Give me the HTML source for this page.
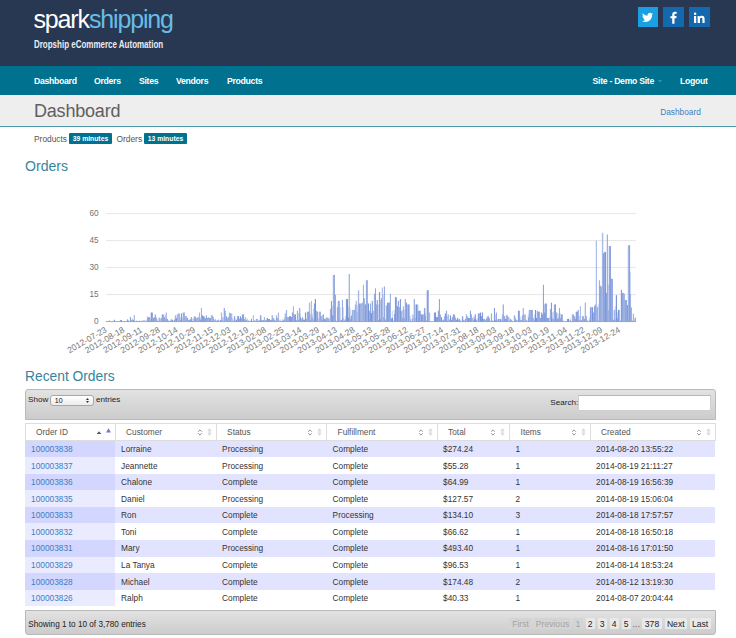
<!DOCTYPE html>
<html><head><meta charset="utf-8"><title>Dashboard</title>
<style>
*{box-sizing:border-box}
html,body{margin:0;padding:0}
body{width:736px;height:638px;overflow:hidden;background:#fff;font-family:"Liberation Sans",sans-serif;position:relative;color:#333}
.hdr{position:absolute;left:0;top:0;width:736px;height:65.5px;background:#293852}
.logo{position:absolute;left:33.5px;top:4.25px;font-size:25px;line-height:30px;color:#fff;letter-spacing:-1.15px;white-space:nowrap}
.logo b{font-weight:normal;color:#66bde6}
.tag{position:absolute;left:34px;top:37.9px;font-size:11.5px;line-height:12px;font-weight:bold;color:#e9ecf1;white-space:nowrap;transform-origin:0 50%;transform:scaleX(0.694)}
.soc{position:absolute;top:6.75px;width:20.5px;height:20.5px}
.nav{position:absolute;left:0;top:65.5px;width:736px;height:29.5px;background:#00728f}
.nav a{position:absolute;top:0.5px;line-height:30px;font-size:8.7px;letter-spacing:-0.3px;font-weight:bold;color:#fff;white-space:nowrap}
.tbar{position:absolute;left:0;top:95px;width:736px;height:32px;background:#eeeeee;border-bottom:1px solid #4c98ad}
.tbar h1{position:absolute;left:34px;top:1px;margin:0;font-size:18px;line-height:31px;font-weight:normal;color:#606060;letter-spacing:-0.2px}
.tbar .crumb{position:absolute;left:660.2px;top:0.5px;line-height:33px;font-size:8.3px;color:#3c7fc0}
.sync{position:absolute;left:34px;top:132.4px;height:12px;font-size:8.4px;line-height:14px;color:#555;white-space:nowrap}
.badge{position:absolute;top:0.3px;height:11px;line-height:11px;background:#00728f;color:#fff;font-weight:bold;font-size:6.8px;text-align:center;border-radius:1px}
h2{position:absolute;margin:0;font-weight:normal;font-size:13.8px;line-height:18px;color:#3585a0;left:25px;white-space:nowrap}
.chart{position:absolute;left:0;top:190px}
.tool{position:absolute;left:24.8px;width:691.4px;border:1px solid #b9b9b9;background:linear-gradient(#e2e2e2,#cccccc);font-size:8.1px;color:#222}
.tool.top{top:389px;height:30.5px;border-radius:3px 3px 0 0}
.tool.bot{top:609.6px;height:25px;border-radius:0 0 3px 3px}
.sel{position:absolute;left:24px;top:5px;width:44.5px;height:11px;border:1px solid #a8a8a8;border-radius:3px;background:linear-gradient(#fff,#ececec);font-size:7px;line-height:9px;padding-left:4px;color:#111}
.search{position:absolute;left:552.6px;top:4.6px;width:132.4px;height:16.2px;background:#fff;border:1px solid #cfcfcf;border-top-color:#b8b8b8;border-radius:1px}
table{position:absolute;left:24.6px;top:423.1px;width:690.5px;border-collapse:collapse;table-layout:fixed;font-size:8.3px;color:#333}
th{height:16.5px;border:1px solid #ddd;background:#fff;font-weight:normal;color:#555;text-align:left;padding:0;font-size:8.3px}
.thw{position:relative;padding-left:10.5px;line-height:14px;padding-top:0.9px;height:15.5px}
.si{position:absolute;right:13px;top:5px;line-height:0}
.si2{position:absolute;right:4px;top:4.2px;line-height:0}
td{height:16.56px;padding:1.5px 0 0 6px;line-height:15.06px;white-space:nowrap;overflow:hidden}
tr.odd td{background:#e2e4ff}
tr.odd td.s1{background:#d3d6ff}
tr.even td{background:#fff}
tr.even td.s1{background:#eaebff}
td a{color:#3a80c2}
.pg{position:absolute;top:7.2px;height:11.5px;line-height:12.5px;font-size:8.6px;margin-left:-0.8px;color:#222;background:#e9e9e9;text-align:center;border-radius:1px}
.pg.dis{background:#d4d4d4;color:#a4a4a4}
</style></head><body>
<div class="hdr">
 <div class="logo">spark<b>shipping</b></div>
 <div class="tag">Dropship eCommerce Automation</div>
 <div class="soc" style="left:637.5px;background:#1a9fe3"><svg width="20" height="20" viewBox="0.500 -0.700 20 20"><path d="M15.6 6.3c-.4.2-.9.3-1.3.4.5-.3.8-.7 1-1.300-.4.300-.9.400-1.400.500a2.300 2.300 0 0 0-3.900 2.100c-1.900-.1-3.600-1-4.700-2.400-.6 1-.3 2.400.7 3-.4 0-.7-.1-1-.3 0 1.100.8 2.100 1.800 2.300-.3.100-.7.100-1 0 .3.900 1.100 1.600 2.100 1.600-1 .8-2.200 1.100-3.400 1 1 .700 2.300 1 3.500 1 4.300 0 6.700-3.700 6.500-6.900.4-.3.800-.7 1.100-1.100z" fill="#fff"/></svg></div>
 <div class="soc" style="left:663.2px;background:#1468ad"><svg width="20" height="20" viewBox="-0.700 -0.700 20 20"><path d="M10.800 16v-5.500h1.800l.3-2.100h-2.100v-1.300c0-.6.2-1 1-1h1.200V4.200c-.2 0-.9-.1-1.700-.1-1.700 0-2.800 1-2.800 2.900v1.500H6.700v2.100h1.800V16z" fill="#fff"/></svg></div>
 <div class="soc" style="left:689.2px;background:#1468ad"><svg width="20" height="20" viewBox="0 -0.900 20 20"><path d="M5 8h2.200v7H5zM6.100 4.600a1.250 1.250 0 1 1 0 2.500 1.250 1.250 0 0 1 0-2.500zM8.600 8h2.100v1c.3-.6 1.100-1.200 2.200-1.200 2.300 0 2.700 1.500 2.700 3.400V15h-2.200v-3.400c0-.8 0-1.800-1.100-1.800s-1.300.9-1.300 1.800V15H8.600z" fill="#fff"/></svg></div>
</div>
<div class="nav">
 <a style="left:34px">Dashboard</a><a style="left:94px">Orders</a><a style="left:139px">Sites</a><a style="left:176px">Vendors</a><a style="left:227px">Products</a>
 <a style="left:592.6px">Site - Demo Site</a><svg style="position:absolute;left:657.5px;top:14px" width="4" height="3" viewBox="0 0 4 3"><path d="M0 0H4L2 2.500Z" fill="#3a93ab"/></svg><a style="left:680px">Logout</a>
</div>
<div class="tbar"><h1>Dashboard</h1><span class="crumb">Dashboard</span></div>
<div class="sync">Products<span class="badge" style="left:35.3px;width:42.3px">39 minutes</span><span style="position:absolute;left:82.5px">Orders</span><span class="badge" style="left:110px;width:43px">13 minutes</span></div>
<h2 style="top:157.4px;font-size:14.1px">Orders</h2>
<svg class="chart" width="736" height="180" viewBox="0 190 736 180">
<g font-family="Liberation Sans, sans-serif" font-size="8.2" fill="#727272">
<line x1="105.8" x2="635.8" y1="213.6" y2="213.6" stroke="#e6e6e6" stroke-width="1"/><text x="98.5" y="215.7" text-anchor="end">60</text><line x1="105.8" x2="635.8" y1="240.6" y2="240.6" stroke="#e6e6e6" stroke-width="1"/><text x="98.5" y="242.7" text-anchor="end">45</text><line x1="105.8" x2="635.8" y1="267.6" y2="267.6" stroke="#e6e6e6" stroke-width="1"/><text x="98.5" y="269.7" text-anchor="end">30</text><line x1="105.8" x2="635.8" y1="294.6" y2="294.6" stroke="#e6e6e6" stroke-width="1"/><text x="98.5" y="296.7" text-anchor="end">15</text><line x1="105.8" x2="635.8" y1="321.6" y2="321.6" stroke="#c8c8c8" stroke-width="1"/><text x="98.5" y="323.7" text-anchor="end">0</text>
</g>
<g><rect x="105.8" y="321.1" width="530.0" height="0.9" fill="#8fa7df"/><path d="M105.8 321.6V321.1H106.8V321.2H107.8V321.0H108.8V319.9H109.8V321.2H110.8V321.1H111.8V321.2H112.8V321.2H113.8V319.8H114.8V321.2H115.8V321.1H116.8V321.2H117.8V321.1H118.8V321.2H119.8V320.0H120.8V320.0H121.8V321.2H122.8V321.2H123.8V321.0H124.8V321.2H125.8V321.2H126.8V319.4H127.8V319.9H128.8V320.9H129.8V317.1H130.8V320.2H131.8V318.9H132.8V320.2H133.8V315.3H134.8V321.0H135.8V320.7H136.8V320.9H137.8V321.0H138.8V320.7H139.8V321.2H140.8V321.3H141.8V319.8H142.8V320.1H143.8V320.1H144.8V319.8H145.8V320.8H146.8V315.9H147.8V317.1H148.8V317.1H149.8V318.7H150.8V312.6H151.8V312.6H152.8V318.0H153.8V317.1H154.8V314.4H155.8V317.6H156.8V319.6H157.8V318.5H158.8V317.6H159.8V319.1H160.8V317.9H161.8V314.4H162.8V314.4H163.8V317.1H164.8V315.1H165.8V312.6H166.8V318.9H167.8V320.4H168.8V320.7H169.8V320.5H170.8V319.3H171.8V319.8H172.8V320.3H173.8V319.5H174.8V315.3H175.8V318.0H176.8V314.4H177.8V313.5H178.8V313.5H179.8V317.3H180.8V313.5H181.8V318.0H182.8V312.6H183.8V312.6H184.8V316.2H185.8V316.2H186.8V318.0H187.8V320.2H188.8V319.8H189.8V319.4H190.8V317.1H191.8V318.5H192.8V318.9H193.8V316.5H194.8V316.8H195.8V318.5H196.8V317.3H197.8V317.5H198.8V312.6H199.8V317.3H200.8V308.1H201.8V315.3H202.8V316.2H203.8V316.7H204.8V318.3H205.8V315.3H206.8V318.0H207.8V317.1H208.8V318.0H209.8V318.0H210.8V315.3H211.8V315.3H212.8V317.1H213.8V319.8H214.8V319.3H215.8V321.5H216.8V320.1H217.8V319.6H218.8V320.7H219.8V320.0H220.8V312.6H221.8V317.3H222.8V317.3H223.8V308.1H224.8V310.8H225.8V316.2H226.8V318.0H227.8V317.1H228.8V312.6H229.8V313.5H230.8V313.5H231.8V318.0H232.8V319.4H233.8V316.2H234.8V318.7H235.8V319.8H236.8V316.2H237.8V316.2H238.8V318.9H239.8V316.2H240.8V318.0H241.8V314.4H242.8V314.4H243.8V319.2H244.8V317.0H245.8V319.7H246.8V318.2H247.8V320.5H248.8V321.1H249.8V320.7H250.8V318.9H251.8V320.9H252.8V315.3H253.8V320.4H254.8V320.6H255.8V318.9H256.8V318.9H257.8V320.7H258.8V320.2H259.8V315.3H260.8V320.4H261.8V319.9H262.8V320.2H263.8V317.1H264.8V320.2H265.8V319.8H266.8V318.0H267.8V318.9H268.8V318.9H269.8V320.2H270.8V319.8H271.8V315.3H272.8V318.0H273.8V319.8H274.8V320.2H275.8V315.3H276.8V318.0H277.8V312.6H278.8V319.9H279.8V319.4H280.8V320.9H281.8V319.4H282.8V320.4H283.8V317.3H284.8V313.5H285.8V309.9H286.8V317.1H287.8V317.1H288.8V316.2H289.8V316.2H290.8V317.1H291.8V312.6H292.8V306.3H293.8V314.4H294.8V314.4H295.8V319.9H296.8V310.8H297.8V313.0H298.8V308.1H299.8V313.7H300.8V319.2H301.8V317.1H302.8V318.0H303.8V319.8H304.8V312.6H305.8V318.7H306.8V311.7H307.8V311.7H308.8V302.7H309.8V314.4H310.8V300.9H311.8V313.7H312.8V308.7H313.8V303.6H314.8V299.1H315.8V310.8H316.8V311.7H317.8V318.0H318.8V311.7H319.8V311.7H320.8V316.2H321.8V315.1H322.8V314.4H323.8V318.9H324.8V318.4H325.8V317.4H326.8V317.6H327.8V317.5H328.8V317.9H329.8V309.0H330.8V300.9H331.8V305.8H332.8V274.9H333.8V274.9H334.8V294.7H335.8V320.8H336.8V307.2H337.8V300.9H338.8V300.9H339.8V307.2H340.8V320.2H341.8V300.0H342.8V307.2H343.8V319.4H344.8V315.9H345.8V299.1H346.8V299.1H347.8V306.5H348.8V274.0H349.8V308.7H350.8V315.6H351.8V309.9H352.8V309.9H353.8V309.9H354.8V304.5H355.8V300.9H356.8V305.1H357.8V290.2H358.8V303.6H359.8V303.6H360.8V303.6H361.8V302.7H362.8V284.8H363.8V298.2H364.8V304.5H365.8V280.3H366.8V280.3H367.8V303.6H368.8V310.8H369.8V303.6H370.8V313.2H371.8V300.9H372.8V310.8H373.8V293.8H374.8V288.4H375.8V304.5H376.8V300.0H377.8V304.4H378.8V292.0H379.8V300.0H380.8V298.2H381.8V287.5H382.8V294.3H383.8V286.6H384.8V318.7H385.8V305.4H386.8V302.7H387.8V302.7H388.8V302.7H389.8V293.8H390.8V318.4H391.8V310.8H392.8V320.2H393.8V310.1H394.8V297.3H395.8V297.3H396.8V306.3H397.8V300.9H398.8V307.2H399.8V299.1H400.8V311.1H401.8V309.4H402.8V306.3H403.8V309.4H404.8V299.1H405.8V302.7H406.8V304.5H407.8V304.5H408.8V304.5H409.8V315.9H410.8V321.4H411.8V314.4H412.8V314.4H413.8V299.1H414.8V304.4H415.8V304.5H416.8V304.5H417.8V310.8H418.8V310.8H419.8V310.8H420.8V314.4H421.8V314.4H422.8V314.4H423.8V308.1H424.8V313.0H425.8V320.5H426.8V290.2H427.8V290.2H428.8V312.6H429.8V320.9H430.8V321.1H431.8V321.1H432.8V321.1H433.8V312.6H434.8V312.6H435.8V317.1H436.8V317.1H437.8V310.8H438.8V299.1H439.8V314.4H440.8V317.1H441.8V319.8H442.8V319.8H443.8V316.2H444.8V313.5H445.8V310.8H446.8V315.9H447.8V314.4H448.8V318.7H449.8V315.3H450.8V319.8H451.8V317.1H452.8V314.4H453.8V314.4H454.8V315.9H455.8V319.8H456.8V318.0H457.8V319.8H458.8V318.9H459.8V319.4H460.8V321.2H461.8V316.2H462.8V319.8H463.8V320.2H464.8V318.9H465.8V314.4H466.8V316.2H467.8V318.0H468.8V318.0H469.8V310.8H470.8V314.4H471.8V318.0H472.8V316.6H473.8V316.6H474.8V314.4H475.8V319.8H476.8V318.0H477.8V313.5H478.8V313.5H479.8V312.6H480.8V316.2H481.8V312.6H482.8V318.9H483.8V318.9H484.8V319.8H485.8V318.6H486.8V316.2H487.8V316.2H488.8V318.0H489.8V320.2H490.8V313.5H491.8V320.7H492.8V320.7H493.8V308.1H494.8V314.4H495.8V312.6H496.8V319.4H497.8V318.9H498.8V318.9H499.8V318.9H500.8V320.8H501.8V314.4H502.8V304.5H503.8V316.2H504.8V318.9H505.8V315.3H506.8V315.3H507.8V317.1H508.8V317.3H509.8V318.9H510.8V319.8H511.8V320.9H512.8V320.9H513.8V315.3H514.8V316.6H515.8V319.8H516.8V320.2H517.8V310.8H518.8V310.8H519.8V316.6H520.8V319.8H521.8V315.3H522.8V308.1H523.8V314.4H524.8V314.4H525.8V319.8H526.8V320.2H527.8V314.4H528.8V309.9H529.8V309.9H530.8V309.9H531.8V309.9H532.8V318.0H533.8V314.4H534.8V309.9H535.8V318.0H536.8V310.8H537.8V311.7H538.8V311.7H539.8V318.0H540.8V312.6H541.8V314.4H542.8V284.8H543.8V304.4H544.8V303.6H545.8V303.6H546.8V318.0H547.8V318.0H548.8V317.3H549.8V309.0H550.8V302.7H551.8V312.3H552.8V311.5H553.8V304.5H554.8V304.5H555.8V312.6H556.8V318.9H557.8V313.7H558.8V308.1H559.8V313.0H560.8V314.4H561.8V314.4H562.8V320.2H563.8V321.2H564.8V321.2H565.8V321.3H566.8V318.9H567.8V318.9H568.8V320.2H569.8V318.0H570.8V321.4H571.8V314.4H572.8V314.4H573.8V316.2H574.8V318.9H575.8V311.7H576.8V311.7H577.8V309.9H578.8V315.9H579.8V306.3H580.8V320.1H581.8V316.2H582.8V316.2H583.8V318.9H584.8V302.7H585.8V316.2H586.8V319.8H587.8V320.9H588.8V317.3H589.8V307.2H590.8V307.2H591.8V307.2H592.8V312.6H593.8V306.3H594.8V304.5H595.8V240.8H596.8V307.2H597.8V304.4H598.8V280.3H599.8V285.7H600.8V286.6H601.8V232.8H602.8V253.3H603.8V251.9H604.8V251.9H605.8V292.9H606.8V234.6H607.8V284.7H608.8V246.1H609.8V246.1H610.8V278.5H611.8V279.0H612.8V319.8H613.8V309.9H614.8V306.4H615.8V295.2H616.8V312.3H617.8V309.9H618.8V309.9H619.8V320.7H620.8V289.8H621.8V292.9H622.8V292.9H623.8V293.8H624.8V300.0H625.8V300.0H626.8V305.1H627.8V245.2H628.8V245.2H629.8V271.7H630.8V307.5H631.8V320.7H632.8V313.7H633.8V318.3H634.8V317.5H635.8V321.6Z" fill="#b7c6ed" fill-opacity="0.75"/><rect x="109.20" y="320.5" width="0.7" height="1.1" fill="#6b8ad3" fill-opacity="0.55"/><rect x="113.80" y="319.8" width="0.9" height="1.8" fill="#6b8ad3" fill-opacity="0.95"/><rect x="120.30" y="320.0" width="0.8" height="1.6" fill="#6b8ad3" fill-opacity="0.85"/><rect x="121.05" y="320.0" width="0.8" height="1.6" fill="#6b8ad3" fill-opacity="0.95"/><rect x="123.80" y="321.0" width="0.7" height="0.6" fill="#6b8ad3" fill-opacity="0.95"/><rect x="127.05" y="319.4" width="1.0" height="2.2" fill="#6b8ad3" fill-opacity="0.75"/><rect x="128.05" y="320.8" width="0.8" height="0.8" fill="#6b8ad3" fill-opacity="0.85"/><rect x="130.30" y="317.1" width="0.8" height="4.5" fill="#6b8ad3" fill-opacity="0.95"/><rect x="130.90" y="320.2" width="0.7" height="1.4" fill="#6b8ad3" fill-opacity="0.85"/><rect x="132.05" y="318.9" width="0.7" height="2.7" fill="#6b8ad3" fill-opacity="0.55"/><rect x="132.90" y="320.2" width="1.0" height="1.4" fill="#6b8ad3" fill-opacity="0.85"/><rect x="133.80" y="315.3" width="0.9" height="6.3" fill="#6b8ad3" fill-opacity="0.65"/><rect x="136.20" y="320.7" width="0.9" height="0.9" fill="#6b8ad3" fill-opacity="0.65"/><rect x="137.20" y="320.9" width="0.7" height="0.7" fill="#6b8ad3" fill-opacity="0.75"/><rect x="139.20" y="320.7" width="0.9" height="0.9" fill="#6b8ad3" fill-opacity="0.85"/><rect x="145.90" y="320.8" width="0.7" height="0.8" fill="#6b8ad3" fill-opacity="0.75"/><rect x="147.30" y="317.6" width="0.7" height="4.0" fill="#6b8ad3" fill-opacity="0.65"/><rect x="148.20" y="317.1" width="0.8" height="4.5" fill="#6b8ad3" fill-opacity="0.75"/><rect x="148.90" y="317.1" width="0.8" height="4.5" fill="#6b8ad3" fill-opacity="0.85"/><rect x="149.90" y="320.8" width="0.9" height="0.8" fill="#6b8ad3" fill-opacity="0.75"/><rect x="150.80" y="312.6" width="1.0" height="9.0" fill="#6b8ad3" fill-opacity="0.95"/><rect x="151.90" y="312.6" width="0.8" height="9.0" fill="#6b8ad3" fill-opacity="0.85"/><rect x="153.20" y="318.0" width="0.7" height="3.6" fill="#6b8ad3" fill-opacity="0.95"/><rect x="153.90" y="317.1" width="1.0" height="4.5" fill="#6b8ad3" fill-opacity="0.55"/><rect x="154.90" y="314.4" width="0.7" height="7.2" fill="#6b8ad3" fill-opacity="0.95"/><rect x="155.90" y="317.6" width="1.0" height="4.0" fill="#6b8ad3" fill-opacity="0.55"/><rect x="157.80" y="320.9" width="0.8" height="0.7" fill="#6b8ad3" fill-opacity="0.85"/><rect x="159.20" y="317.6" width="0.9" height="4.0" fill="#6b8ad3" fill-opacity="0.55"/><rect x="160.80" y="317.9" width="0.8" height="3.7" fill="#6b8ad3" fill-opacity="0.75"/><rect x="161.90" y="314.4" width="0.8" height="7.2" fill="#6b8ad3" fill-opacity="0.95"/><rect x="163.20" y="314.4" width="0.7" height="7.2" fill="#6b8ad3" fill-opacity="0.75"/><rect x="164.20" y="317.1" width="0.9" height="4.5" fill="#6b8ad3" fill-opacity="0.75"/><rect x="165.20" y="319.1" width="0.8" height="2.5" fill="#6b8ad3" fill-opacity="0.55"/><rect x="165.80" y="312.6" width="0.7" height="9.0" fill="#6b8ad3" fill-opacity="0.75"/><rect x="166.80" y="318.9" width="0.9" height="2.7" fill="#6b8ad3" fill-opacity="0.85"/><rect x="167.80" y="320.4" width="0.8" height="1.2" fill="#6b8ad3" fill-opacity="0.85"/><rect x="170.05" y="321.0" width="0.9" height="0.6" fill="#6b8ad3" fill-opacity="0.85"/><rect x="170.80" y="319.3" width="0.7" height="2.3" fill="#6b8ad3" fill-opacity="0.85"/><rect x="171.90" y="319.8" width="0.9" height="1.8" fill="#6b8ad3" fill-opacity="0.95"/><rect x="174.20" y="319.5" width="0.8" height="2.1" fill="#6b8ad3" fill-opacity="0.75"/><rect x="175.05" y="315.3" width="1.0" height="6.3" fill="#6b8ad3" fill-opacity="0.55"/><rect x="176.20" y="318.0" width="0.8" height="3.6" fill="#6b8ad3" fill-opacity="0.85"/><rect x="176.80" y="314.4" width="1.0" height="7.2" fill="#6b8ad3" fill-opacity="0.55"/><rect x="178.20" y="313.5" width="0.7" height="8.1" fill="#6b8ad3" fill-opacity="0.55"/><rect x="179.05" y="313.5" width="0.8" height="8.1" fill="#6b8ad3" fill-opacity="0.55"/><rect x="180.30" y="319.9" width="0.9" height="1.7" fill="#6b8ad3" fill-opacity="0.75"/><rect x="181.05" y="313.5" width="0.9" height="8.1" fill="#6b8ad3" fill-opacity="0.95"/><rect x="182.80" y="312.6" width="0.9" height="9.0" fill="#6b8ad3" fill-opacity="0.75"/><rect x="184.05" y="312.6" width="0.9" height="9.0" fill="#6b8ad3" fill-opacity="0.55"/><rect x="185.30" y="316.2" width="0.7" height="5.4" fill="#6b8ad3" fill-opacity="0.55"/><rect x="185.90" y="316.2" width="0.7" height="5.4" fill="#6b8ad3" fill-opacity="0.85"/><rect x="187.20" y="318.0" width="1.0" height="3.6" fill="#6b8ad3" fill-opacity="0.75"/><rect x="188.20" y="320.2" width="1.0" height="1.4" fill="#6b8ad3" fill-opacity="0.65"/><rect x="189.20" y="319.8" width="0.8" height="1.8" fill="#6b8ad3" fill-opacity="0.55"/><rect x="190.05" y="319.4" width="0.8" height="2.2" fill="#6b8ad3" fill-opacity="0.95"/><rect x="190.90" y="317.1" width="0.9" height="4.5" fill="#6b8ad3" fill-opacity="0.75"/><rect x="192.20" y="321.0" width="0.9" height="0.6" fill="#6b8ad3" fill-opacity="0.95"/><rect x="193.80" y="316.5" width="0.8" height="5.1" fill="#6b8ad3" fill-opacity="0.85"/><rect x="194.90" y="316.8" width="0.8" height="4.8" fill="#6b8ad3" fill-opacity="0.85"/><rect x="195.80" y="318.5" width="0.7" height="3.1" fill="#6b8ad3" fill-opacity="0.85"/><rect x="197.30" y="317.3" width="0.9" height="4.3" fill="#6b8ad3" fill-opacity="0.65"/><rect x="198.20" y="317.5" width="0.7" height="4.1" fill="#6b8ad3" fill-opacity="0.55"/><rect x="199.05" y="312.6" width="0.7" height="9.0" fill="#6b8ad3" fill-opacity="0.65"/><rect x="199.80" y="319.6" width="1.0" height="2.0" fill="#6b8ad3" fill-opacity="0.85"/><rect x="201.20" y="308.1" width="0.8" height="13.5" fill="#6b8ad3" fill-opacity="0.65"/><rect x="201.90" y="315.3" width="1.0" height="6.3" fill="#6b8ad3" fill-opacity="0.85"/><rect x="203.30" y="316.2" width="0.8" height="5.4" fill="#6b8ad3" fill-opacity="0.95"/><rect x="203.80" y="316.7" width="0.9" height="4.9" fill="#6b8ad3" fill-opacity="0.75"/><rect x="205.05" y="318.3" width="0.9" height="3.3" fill="#6b8ad3" fill-opacity="0.75"/><rect x="206.05" y="315.3" width="0.9" height="6.3" fill="#6b8ad3" fill-opacity="0.65"/><rect x="207.20" y="318.0" width="0.8" height="3.6" fill="#6b8ad3" fill-opacity="0.65"/><rect x="207.90" y="317.1" width="0.8" height="4.5" fill="#6b8ad3" fill-opacity="0.65"/><rect x="209.05" y="318.0" width="0.8" height="3.6" fill="#6b8ad3" fill-opacity="0.75"/><rect x="209.80" y="318.0" width="1.0" height="3.6" fill="#6b8ad3" fill-opacity="0.75"/><rect x="210.90" y="315.3" width="0.8" height="6.3" fill="#6b8ad3" fill-opacity="0.55"/><rect x="212.20" y="315.3" width="0.7" height="6.3" fill="#6b8ad3" fill-opacity="0.55"/><rect x="212.80" y="317.1" width="1.0" height="4.5" fill="#6b8ad3" fill-opacity="0.65"/><rect x="214.20" y="319.8" width="0.9" height="1.8" fill="#6b8ad3" fill-opacity="0.55"/><rect x="215.05" y="319.3" width="0.8" height="2.3" fill="#6b8ad3" fill-opacity="0.55"/><rect x="216.80" y="320.1" width="0.8" height="1.5" fill="#6b8ad3" fill-opacity="0.95"/><rect x="218.30" y="319.6" width="0.8" height="2.0" fill="#6b8ad3" fill-opacity="0.55"/><rect x="220.05" y="320.0" width="0.8" height="1.6" fill="#6b8ad3" fill-opacity="0.85"/><rect x="221.30" y="312.6" width="0.9" height="9.0" fill="#6b8ad3" fill-opacity="0.55"/><rect x="221.80" y="319.9" width="0.9" height="1.7" fill="#6b8ad3" fill-opacity="0.65"/><rect x="223.80" y="308.1" width="0.9" height="13.5" fill="#6b8ad3" fill-opacity="0.75"/><rect x="224.90" y="310.8" width="0.7" height="10.8" fill="#6b8ad3" fill-opacity="0.65"/><rect x="226.05" y="316.2" width="0.7" height="5.4" fill="#6b8ad3" fill-opacity="0.95"/><rect x="226.90" y="318.0" width="0.7" height="3.6" fill="#6b8ad3" fill-opacity="0.75"/><rect x="228.20" y="317.1" width="0.9" height="4.5" fill="#6b8ad3" fill-opacity="0.65"/><rect x="229.30" y="312.6" width="0.9" height="9.0" fill="#6b8ad3" fill-opacity="0.55"/><rect x="229.90" y="313.5" width="0.7" height="8.1" fill="#6b8ad3" fill-opacity="0.85"/><rect x="231.30" y="313.5" width="1.0" height="8.1" fill="#6b8ad3" fill-opacity="0.55"/><rect x="232.20" y="320.8" width="0.7" height="0.8" fill="#6b8ad3" fill-opacity="0.85"/><rect x="234.30" y="316.2" width="0.8" height="5.4" fill="#6b8ad3" fill-opacity="0.95"/><rect x="234.80" y="320.7" width="0.8" height="0.9" fill="#6b8ad3" fill-opacity="0.85"/><rect x="236.05" y="319.8" width="1.0" height="1.8" fill="#6b8ad3" fill-opacity="0.75"/><rect x="237.05" y="316.2" width="1.0" height="5.4" fill="#6b8ad3" fill-opacity="0.55"/><rect x="238.05" y="316.2" width="0.9" height="5.4" fill="#6b8ad3" fill-opacity="0.85"/><rect x="239.20" y="318.9" width="0.7" height="2.7" fill="#6b8ad3" fill-opacity="0.75"/><rect x="239.90" y="316.2" width="1.0" height="5.4" fill="#6b8ad3" fill-opacity="0.85"/><rect x="240.90" y="318.0" width="0.7" height="3.6" fill="#6b8ad3" fill-opacity="0.85"/><rect x="241.90" y="314.4" width="1.0" height="7.2" fill="#6b8ad3" fill-opacity="0.55"/><rect x="242.80" y="314.4" width="1.0" height="7.2" fill="#6b8ad3" fill-opacity="0.95"/><rect x="244.05" y="319.2" width="1.0" height="2.4" fill="#6b8ad3" fill-opacity="0.65"/><rect x="244.90" y="317.0" width="0.7" height="4.6" fill="#6b8ad3" fill-opacity="0.55"/><rect x="246.30" y="319.7" width="0.8" height="1.9" fill="#6b8ad3" fill-opacity="0.85"/><rect x="247.80" y="320.5" width="0.9" height="1.1" fill="#6b8ad3" fill-opacity="0.95"/><rect x="249.90" y="320.7" width="0.8" height="0.9" fill="#6b8ad3" fill-opacity="0.75"/><rect x="251.05" y="318.9" width="0.8" height="2.7" fill="#6b8ad3" fill-opacity="0.95"/><rect x="252.90" y="315.3" width="0.7" height="6.3" fill="#6b8ad3" fill-opacity="0.55"/><rect x="254.20" y="320.4" width="1.0" height="1.2" fill="#6b8ad3" fill-opacity="0.65"/><rect x="256.05" y="318.9" width="0.8" height="2.7" fill="#6b8ad3" fill-opacity="0.55"/><rect x="257.20" y="318.9" width="0.9" height="2.7" fill="#6b8ad3" fill-opacity="0.55"/><rect x="258.30" y="320.7" width="1.0" height="0.9" fill="#6b8ad3" fill-opacity="0.55"/><rect x="259.30" y="320.2" width="0.8" height="1.4" fill="#6b8ad3" fill-opacity="0.65"/><rect x="260.30" y="315.3" width="1.0" height="6.3" fill="#6b8ad3" fill-opacity="0.95"/><rect x="260.90" y="320.4" width="1.0" height="1.2" fill="#6b8ad3" fill-opacity="0.65"/><rect x="262.30" y="319.9" width="0.8" height="1.7" fill="#6b8ad3" fill-opacity="0.55"/><rect x="263.20" y="320.2" width="0.8" height="1.4" fill="#6b8ad3" fill-opacity="0.85"/><rect x="264.05" y="317.1" width="0.7" height="4.5" fill="#6b8ad3" fill-opacity="0.65"/><rect x="264.90" y="320.2" width="0.8" height="1.4" fill="#6b8ad3" fill-opacity="0.55"/><rect x="266.30" y="319.8" width="0.7" height="1.8" fill="#6b8ad3" fill-opacity="0.75"/><rect x="266.80" y="318.0" width="1.0" height="3.6" fill="#6b8ad3" fill-opacity="0.95"/><rect x="268.20" y="318.9" width="0.9" height="2.7" fill="#6b8ad3" fill-opacity="0.85"/><rect x="269.05" y="318.9" width="0.8" height="2.7" fill="#6b8ad3" fill-opacity="0.85"/><rect x="270.20" y="320.2" width="0.9" height="1.4" fill="#6b8ad3" fill-opacity="0.85"/><rect x="271.30" y="319.8" width="1.0" height="1.8" fill="#6b8ad3" fill-opacity="0.65"/><rect x="271.80" y="315.3" width="0.7" height="6.3" fill="#6b8ad3" fill-opacity="0.95"/><rect x="273.20" y="318.0" width="1.0" height="3.6" fill="#6b8ad3" fill-opacity="0.65"/><rect x="274.20" y="319.8" width="1.0" height="1.8" fill="#6b8ad3" fill-opacity="0.65"/><rect x="276.20" y="315.3" width="1.0" height="6.3" fill="#6b8ad3" fill-opacity="0.55"/><rect x="276.80" y="318.0" width="0.8" height="3.6" fill="#6b8ad3" fill-opacity="0.75"/><rect x="278.20" y="312.6" width="0.9" height="9.0" fill="#6b8ad3" fill-opacity="0.55"/><rect x="280.20" y="320.8" width="0.7" height="0.8" fill="#6b8ad3" fill-opacity="0.55"/><rect x="280.90" y="320.9" width="0.7" height="0.7" fill="#6b8ad3" fill-opacity="0.75"/><rect x="282.30" y="319.4" width="0.7" height="2.2" fill="#6b8ad3" fill-opacity="0.55"/><rect x="283.30" y="320.4" width="1.0" height="1.2" fill="#6b8ad3" fill-opacity="0.65"/><rect x="283.80" y="319.4" width="0.7" height="2.2" fill="#6b8ad3" fill-opacity="0.95"/><rect x="284.80" y="313.5" width="0.8" height="8.1" fill="#6b8ad3" fill-opacity="0.65"/><rect x="286.20" y="309.9" width="0.9" height="11.7" fill="#6b8ad3" fill-opacity="0.65"/><rect x="286.90" y="317.1" width="0.7" height="4.5" fill="#6b8ad3" fill-opacity="0.75"/><rect x="288.30" y="317.1" width="0.9" height="4.5" fill="#6b8ad3" fill-opacity="0.65"/><rect x="289.05" y="316.2" width="0.9" height="5.4" fill="#6b8ad3" fill-opacity="0.85"/><rect x="289.90" y="316.2" width="0.9" height="5.4" fill="#6b8ad3" fill-opacity="0.95"/><rect x="291.20" y="317.1" width="0.8" height="4.5" fill="#6b8ad3" fill-opacity="0.95"/><rect x="292.05" y="312.6" width="0.8" height="9.0" fill="#6b8ad3" fill-opacity="0.75"/><rect x="293.05" y="306.3" width="0.7" height="15.3" fill="#6b8ad3" fill-opacity="0.65"/><rect x="293.90" y="314.4" width="1.0" height="7.2" fill="#6b8ad3" fill-opacity="0.65"/><rect x="295.05" y="314.4" width="0.9" height="7.2" fill="#6b8ad3" fill-opacity="0.85"/><rect x="295.90" y="319.9" width="0.9" height="1.7" fill="#6b8ad3" fill-opacity="0.55"/><rect x="297.30" y="310.8" width="0.7" height="10.8" fill="#6b8ad3" fill-opacity="0.75"/><rect x="298.20" y="320.0" width="0.7" height="1.6" fill="#6b8ad3" fill-opacity="0.75"/><rect x="299.30" y="308.1" width="1.0" height="13.5" fill="#6b8ad3" fill-opacity="0.75"/><rect x="300.05" y="317.5" width="1.0" height="4.1" fill="#6b8ad3" fill-opacity="0.75"/><rect x="301.30" y="319.2" width="0.8" height="2.4" fill="#6b8ad3" fill-opacity="0.75"/><rect x="302.05" y="317.1" width="0.7" height="4.5" fill="#6b8ad3" fill-opacity="0.85"/><rect x="302.90" y="320.1" width="0.8" height="1.5" fill="#6b8ad3" fill-opacity="0.95"/><rect x="303.80" y="319.8" width="0.9" height="1.8" fill="#6b8ad3" fill-opacity="0.95"/><rect x="305.05" y="312.6" width="0.9" height="9.0" fill="#6b8ad3" fill-opacity="0.95"/><rect x="306.05" y="318.7" width="0.7" height="2.9" fill="#6b8ad3" fill-opacity="0.55"/><rect x="306.90" y="311.7" width="0.8" height="9.9" fill="#6b8ad3" fill-opacity="0.75"/><rect x="308.30" y="311.7" width="1.0" height="9.9" fill="#6b8ad3" fill-opacity="0.85"/><rect x="309.30" y="302.7" width="0.9" height="18.9" fill="#6b8ad3" fill-opacity="0.55"/><rect x="309.90" y="320.0" width="1.0" height="1.6" fill="#6b8ad3" fill-opacity="0.65"/><rect x="311.30" y="300.9" width="0.7" height="20.7" fill="#6b8ad3" fill-opacity="0.55"/><rect x="311.80" y="317.3" width="0.7" height="4.3" fill="#6b8ad3" fill-opacity="0.95"/><rect x="313.05" y="319.7" width="0.9" height="1.9" fill="#6b8ad3" fill-opacity="0.55"/><rect x="314.30" y="303.6" width="0.9" height="18.0" fill="#6b8ad3" fill-opacity="0.95"/><rect x="314.90" y="299.1" width="1.0" height="22.5" fill="#6b8ad3" fill-opacity="0.95"/><rect x="316.05" y="310.8" width="0.8" height="10.8" fill="#6b8ad3" fill-opacity="0.65"/><rect x="317.05" y="311.7" width="1.0" height="9.9" fill="#6b8ad3" fill-opacity="0.65"/><rect x="318.90" y="311.7" width="0.7" height="9.9" fill="#6b8ad3" fill-opacity="0.65"/><rect x="319.90" y="311.7" width="1.0" height="9.9" fill="#6b8ad3" fill-opacity="0.55"/><rect x="320.80" y="316.2" width="0.8" height="5.4" fill="#6b8ad3" fill-opacity="0.75"/><rect x="322.20" y="319.8" width="0.9" height="1.8" fill="#6b8ad3" fill-opacity="0.55"/><rect x="322.80" y="314.4" width="0.9" height="7.2" fill="#6b8ad3" fill-opacity="0.95"/><rect x="324.30" y="318.9" width="1.0" height="2.7" fill="#6b8ad3" fill-opacity="0.95"/><rect x="325.30" y="319.5" width="1.0" height="2.1" fill="#6b8ad3" fill-opacity="0.65"/><rect x="325.90" y="317.4" width="0.7" height="4.2" fill="#6b8ad3" fill-opacity="0.55"/><rect x="326.80" y="317.6" width="0.7" height="4.0" fill="#6b8ad3" fill-opacity="0.85"/><rect x="327.90" y="318.8" width="0.8" height="2.8" fill="#6b8ad3" fill-opacity="0.65"/><rect x="328.80" y="319.4" width="0.7" height="2.2" fill="#6b8ad3" fill-opacity="0.55"/><rect x="330.30" y="309.0" width="0.8" height="12.6" fill="#6b8ad3" fill-opacity="0.65"/><rect x="331.20" y="300.9" width="0.8" height="20.7" fill="#6b8ad3" fill-opacity="0.95"/><rect x="332.30" y="315.1" width="1.0" height="6.5" fill="#6b8ad3" fill-opacity="0.95"/><rect x="332.90" y="274.9" width="0.9" height="46.7" fill="#6b8ad3" fill-opacity="0.55"/><rect x="334.05" y="274.9" width="0.7" height="46.7" fill="#6b8ad3" fill-opacity="0.85"/><rect x="335.30" y="294.7" width="0.7" height="26.9" fill="#6b8ad3" fill-opacity="0.85"/><rect x="336.20" y="320.8" width="1.0" height="0.8" fill="#6b8ad3" fill-opacity="0.55"/><rect x="337.20" y="307.2" width="0.8" height="14.4" fill="#6b8ad3" fill-opacity="0.65"/><rect x="337.80" y="300.9" width="0.9" height="20.7" fill="#6b8ad3" fill-opacity="0.65"/><rect x="338.80" y="300.9" width="0.7" height="20.7" fill="#6b8ad3" fill-opacity="0.75"/><rect x="340.05" y="319.7" width="0.7" height="1.9" fill="#6b8ad3" fill-opacity="0.75"/><rect x="341.30" y="320.2" width="1.0" height="1.4" fill="#6b8ad3" fill-opacity="0.95"/><rect x="342.05" y="300.0" width="0.9" height="21.6" fill="#6b8ad3" fill-opacity="0.65"/><rect x="342.80" y="317.9" width="0.7" height="3.7" fill="#6b8ad3" fill-opacity="0.65"/><rect x="344.05" y="320.4" width="0.8" height="1.2" fill="#6b8ad3" fill-opacity="0.65"/><rect x="344.90" y="319.4" width="0.9" height="2.2" fill="#6b8ad3" fill-opacity="0.65"/><rect x="346.20" y="299.1" width="0.9" height="22.5" fill="#6b8ad3" fill-opacity="0.95"/><rect x="346.90" y="299.1" width="1.0" height="22.5" fill="#6b8ad3" fill-opacity="0.95"/><rect x="348.20" y="317.4" width="1.0" height="4.2" fill="#6b8ad3" fill-opacity="0.95"/><rect x="348.80" y="274.0" width="0.7" height="47.6" fill="#6b8ad3" fill-opacity="0.85"/><rect x="349.90" y="318.8" width="0.9" height="2.8" fill="#6b8ad3" fill-opacity="0.65"/><rect x="351.20" y="315.6" width="0.7" height="6.0" fill="#6b8ad3" fill-opacity="0.95"/><rect x="351.90" y="309.9" width="0.8" height="11.7" fill="#6b8ad3" fill-opacity="0.55"/><rect x="352.80" y="309.9" width="0.7" height="11.7" fill="#6b8ad3" fill-opacity="0.55"/><rect x="354.30" y="309.9" width="0.8" height="11.7" fill="#6b8ad3" fill-opacity="0.75"/><rect x="354.90" y="304.5" width="0.7" height="17.1" fill="#6b8ad3" fill-opacity="0.55"/><rect x="355.80" y="300.9" width="0.8" height="20.7" fill="#6b8ad3" fill-opacity="0.55"/><rect x="356.80" y="312.1" width="0.7" height="9.5" fill="#6b8ad3" fill-opacity="0.55"/><rect x="358.30" y="290.2" width="0.9" height="31.4" fill="#6b8ad3" fill-opacity="0.65"/><rect x="359.30" y="303.6" width="0.7" height="18.0" fill="#6b8ad3" fill-opacity="0.85"/><rect x="359.80" y="303.6" width="0.8" height="18.0" fill="#6b8ad3" fill-opacity="0.65"/><rect x="360.90" y="303.6" width="0.7" height="18.0" fill="#6b8ad3" fill-opacity="0.55"/><rect x="361.80" y="302.7" width="0.7" height="18.9" fill="#6b8ad3" fill-opacity="0.75"/><rect x="363.20" y="284.8" width="0.7" height="36.8" fill="#6b8ad3" fill-opacity="0.65"/><rect x="363.80" y="298.2" width="0.8" height="23.4" fill="#6b8ad3" fill-opacity="0.75"/><rect x="365.05" y="304.5" width="0.9" height="17.1" fill="#6b8ad3" fill-opacity="0.85"/><rect x="366.05" y="280.3" width="0.7" height="41.3" fill="#6b8ad3" fill-opacity="0.75"/><rect x="367.05" y="280.3" width="0.9" height="41.3" fill="#6b8ad3" fill-opacity="0.55"/><rect x="368.05" y="303.6" width="0.9" height="18.0" fill="#6b8ad3" fill-opacity="0.95"/><rect x="369.30" y="310.8" width="1.0" height="10.8" fill="#6b8ad3" fill-opacity="0.75"/><rect x="370.30" y="303.6" width="0.7" height="18.0" fill="#6b8ad3" fill-opacity="0.85"/><rect x="370.80" y="313.2" width="1.0" height="8.4" fill="#6b8ad3" fill-opacity="0.95"/><rect x="371.80" y="300.9" width="0.9" height="20.7" fill="#6b8ad3" fill-opacity="0.85"/><rect x="372.80" y="310.8" width="0.8" height="10.8" fill="#6b8ad3" fill-opacity="0.55"/><rect x="374.30" y="293.8" width="0.9" height="27.8" fill="#6b8ad3" fill-opacity="0.65"/><rect x="375.20" y="288.4" width="0.7" height="33.2" fill="#6b8ad3" fill-opacity="0.95"/><rect x="375.90" y="304.5" width="0.9" height="17.1" fill="#6b8ad3" fill-opacity="0.55"/><rect x="376.80" y="300.0" width="0.9" height="21.6" fill="#6b8ad3" fill-opacity="0.85"/><rect x="377.80" y="319.9" width="1.0" height="1.7" fill="#6b8ad3" fill-opacity="0.65"/><rect x="379.20" y="292.0" width="0.9" height="29.6" fill="#6b8ad3" fill-opacity="0.95"/><rect x="380.05" y="319.3" width="0.8" height="2.3" fill="#6b8ad3" fill-opacity="0.75"/><rect x="380.90" y="298.2" width="0.8" height="23.4" fill="#6b8ad3" fill-opacity="0.85"/><rect x="381.90" y="287.5" width="0.7" height="34.1" fill="#6b8ad3" fill-opacity="0.55"/><rect x="383.20" y="317.1" width="0.7" height="4.5" fill="#6b8ad3" fill-opacity="0.75"/><rect x="384.05" y="286.6" width="0.7" height="35.0" fill="#6b8ad3" fill-opacity="0.85"/><rect x="385.20" y="319.9" width="0.7" height="1.7" fill="#6b8ad3" fill-opacity="0.85"/><rect x="385.80" y="305.4" width="0.9" height="16.2" fill="#6b8ad3" fill-opacity="0.65"/><rect x="387.05" y="302.7" width="0.9" height="18.9" fill="#6b8ad3" fill-opacity="0.85"/><rect x="388.30" y="302.7" width="0.8" height="18.9" fill="#6b8ad3" fill-opacity="0.85"/><rect x="388.90" y="302.7" width="1.0" height="18.9" fill="#6b8ad3" fill-opacity="0.65"/><rect x="390.30" y="293.8" width="0.7" height="27.8" fill="#6b8ad3" fill-opacity="0.75"/><rect x="391.30" y="318.4" width="0.9" height="3.2" fill="#6b8ad3" fill-opacity="0.95"/><rect x="391.90" y="317.8" width="1.0" height="3.8" fill="#6b8ad3" fill-opacity="0.95"/><rect x="394.05" y="314.0" width="0.8" height="7.6" fill="#6b8ad3" fill-opacity="0.85"/><rect x="395.20" y="297.3" width="0.9" height="24.3" fill="#6b8ad3" fill-opacity="0.95"/><rect x="395.90" y="297.3" width="0.8" height="24.3" fill="#6b8ad3" fill-opacity="0.75"/><rect x="397.20" y="306.3" width="0.8" height="15.3" fill="#6b8ad3" fill-opacity="0.95"/><rect x="397.90" y="300.9" width="0.9" height="20.7" fill="#6b8ad3" fill-opacity="0.75"/><rect x="399.30" y="307.2" width="0.8" height="14.4" fill="#6b8ad3" fill-opacity="0.65"/><rect x="399.90" y="299.1" width="0.9" height="22.5" fill="#6b8ad3" fill-opacity="0.95"/><rect x="401.30" y="311.1" width="0.9" height="10.5" fill="#6b8ad3" fill-opacity="0.65"/><rect x="401.90" y="318.1" width="0.9" height="3.5" fill="#6b8ad3" fill-opacity="0.65"/><rect x="403.05" y="306.3" width="0.7" height="15.3" fill="#6b8ad3" fill-opacity="0.65"/><rect x="403.80" y="317.9" width="0.8" height="3.7" fill="#6b8ad3" fill-opacity="0.85"/><rect x="404.90" y="299.1" width="0.8" height="22.5" fill="#6b8ad3" fill-opacity="0.75"/><rect x="406.05" y="302.7" width="1.0" height="18.9" fill="#6b8ad3" fill-opacity="0.75"/><rect x="406.90" y="304.5" width="0.7" height="17.1" fill="#6b8ad3" fill-opacity="0.55"/><rect x="408.05" y="304.5" width="0.8" height="17.1" fill="#6b8ad3" fill-opacity="0.85"/><rect x="409.20" y="304.5" width="0.7" height="17.1" fill="#6b8ad3" fill-opacity="0.55"/><rect x="410.20" y="319.4" width="1.0" height="2.2" fill="#6b8ad3" fill-opacity="0.65"/><rect x="412.30" y="318.4" width="0.9" height="3.2" fill="#6b8ad3" fill-opacity="0.85"/><rect x="413.80" y="299.1" width="0.8" height="22.5" fill="#6b8ad3" fill-opacity="0.75"/><rect x="415.30" y="318.0" width="1.0" height="3.6" fill="#6b8ad3" fill-opacity="0.55"/><rect x="415.90" y="304.5" width="1.0" height="17.1" fill="#6b8ad3" fill-opacity="0.95"/><rect x="417.30" y="304.5" width="1.0" height="17.1" fill="#6b8ad3" fill-opacity="0.65"/><rect x="418.30" y="310.8" width="0.8" height="10.8" fill="#6b8ad3" fill-opacity="0.65"/><rect x="418.80" y="310.8" width="1.0" height="10.8" fill="#6b8ad3" fill-opacity="0.85"/><rect x="420.05" y="310.8" width="0.9" height="10.8" fill="#6b8ad3" fill-opacity="0.55"/><rect x="421.20" y="314.4" width="0.8" height="7.2" fill="#6b8ad3" fill-opacity="0.85"/><rect x="421.90" y="314.4" width="0.9" height="7.2" fill="#6b8ad3" fill-opacity="0.85"/><rect x="423.20" y="314.4" width="1.0" height="7.2" fill="#6b8ad3" fill-opacity="0.55"/><rect x="424.30" y="308.1" width="1.0" height="13.5" fill="#6b8ad3" fill-opacity="0.95"/><rect x="424.90" y="315.8" width="0.9" height="5.8" fill="#6b8ad3" fill-opacity="0.55"/><rect x="426.20" y="320.5" width="1.0" height="1.1" fill="#6b8ad3" fill-opacity="0.55"/><rect x="426.80" y="290.2" width="0.9" height="31.4" fill="#6b8ad3" fill-opacity="0.95"/><rect x="427.90" y="290.2" width="0.8" height="31.4" fill="#6b8ad3" fill-opacity="0.65"/><rect x="429.30" y="312.6" width="0.9" height="9.0" fill="#6b8ad3" fill-opacity="0.55"/><rect x="434.30" y="312.6" width="1.0" height="9.0" fill="#6b8ad3" fill-opacity="0.95"/><rect x="434.90" y="312.6" width="1.0" height="9.0" fill="#6b8ad3" fill-opacity="0.95"/><rect x="435.80" y="317.1" width="0.9" height="4.5" fill="#6b8ad3" fill-opacity="0.95"/><rect x="437.05" y="317.1" width="1.0" height="4.5" fill="#6b8ad3" fill-opacity="0.85"/><rect x="437.90" y="310.8" width="0.8" height="10.8" fill="#6b8ad3" fill-opacity="0.85"/><rect x="439.30" y="299.1" width="0.7" height="22.5" fill="#6b8ad3" fill-opacity="0.95"/><rect x="440.05" y="314.4" width="0.7" height="7.2" fill="#6b8ad3" fill-opacity="0.75"/><rect x="441.05" y="317.1" width="1.0" height="4.5" fill="#6b8ad3" fill-opacity="0.85"/><rect x="441.80" y="319.8" width="0.7" height="1.8" fill="#6b8ad3" fill-opacity="0.55"/><rect x="443.20" y="319.8" width="1.0" height="1.8" fill="#6b8ad3" fill-opacity="0.75"/><rect x="444.30" y="316.2" width="0.9" height="5.4" fill="#6b8ad3" fill-opacity="0.55"/><rect x="444.90" y="313.5" width="0.9" height="8.1" fill="#6b8ad3" fill-opacity="0.85"/><rect x="446.30" y="310.8" width="0.8" height="10.8" fill="#6b8ad3" fill-opacity="0.85"/><rect x="447.20" y="320.8" width="0.8" height="0.8" fill="#6b8ad3" fill-opacity="0.65"/><rect x="447.90" y="314.4" width="0.7" height="7.2" fill="#6b8ad3" fill-opacity="0.65"/><rect x="449.20" y="319.9" width="0.8" height="1.7" fill="#6b8ad3" fill-opacity="0.65"/><rect x="450.05" y="315.3" width="1.0" height="6.3" fill="#6b8ad3" fill-opacity="0.85"/><rect x="451.05" y="319.8" width="0.8" height="1.8" fill="#6b8ad3" fill-opacity="0.85"/><rect x="452.05" y="317.1" width="0.8" height="4.5" fill="#6b8ad3" fill-opacity="0.75"/><rect x="453.20" y="314.4" width="0.9" height="7.2" fill="#6b8ad3" fill-opacity="0.85"/><rect x="453.90" y="314.4" width="1.0" height="7.2" fill="#6b8ad3" fill-opacity="0.55"/><rect x="455.05" y="317.9" width="0.9" height="3.7" fill="#6b8ad3" fill-opacity="0.65"/><rect x="456.05" y="319.8" width="0.9" height="1.8" fill="#6b8ad3" fill-opacity="0.85"/><rect x="457.20" y="318.0" width="1.0" height="3.6" fill="#6b8ad3" fill-opacity="0.95"/><rect x="457.80" y="319.8" width="0.9" height="1.8" fill="#6b8ad3" fill-opacity="0.65"/><rect x="459.05" y="318.9" width="1.0" height="2.7" fill="#6b8ad3" fill-opacity="0.55"/><rect x="459.80" y="320.5" width="0.9" height="1.1" fill="#6b8ad3" fill-opacity="0.65"/><rect x="462.30" y="316.2" width="0.9" height="5.4" fill="#6b8ad3" fill-opacity="0.95"/><rect x="462.80" y="319.8" width="0.7" height="1.8" fill="#6b8ad3" fill-opacity="0.65"/><rect x="463.80" y="320.8" width="0.9" height="0.8" fill="#6b8ad3" fill-opacity="0.75"/><rect x="465.30" y="318.9" width="0.7" height="2.7" fill="#6b8ad3" fill-opacity="0.95"/><rect x="465.90" y="314.4" width="0.8" height="7.2" fill="#6b8ad3" fill-opacity="0.65"/><rect x="467.20" y="316.2" width="0.9" height="5.4" fill="#6b8ad3" fill-opacity="0.65"/><rect x="467.90" y="318.0" width="1.0" height="3.6" fill="#6b8ad3" fill-opacity="0.95"/><rect x="468.90" y="318.0" width="0.7" height="3.6" fill="#6b8ad3" fill-opacity="0.95"/><rect x="470.05" y="310.8" width="0.8" height="10.8" fill="#6b8ad3" fill-opacity="0.85"/><rect x="470.90" y="314.4" width="0.7" height="7.2" fill="#6b8ad3" fill-opacity="0.85"/><rect x="471.80" y="318.0" width="0.7" height="3.6" fill="#6b8ad3" fill-opacity="0.75"/><rect x="473.20" y="320.0" width="0.8" height="1.6" fill="#6b8ad3" fill-opacity="0.65"/><rect x="474.20" y="318.9" width="1.0" height="2.7" fill="#6b8ad3" fill-opacity="0.95"/><rect x="474.80" y="314.4" width="1.0" height="7.2" fill="#6b8ad3" fill-opacity="0.85"/><rect x="475.90" y="319.8" width="1.0" height="1.8" fill="#6b8ad3" fill-opacity="0.65"/><rect x="478.20" y="313.5" width="0.8" height="8.1" fill="#6b8ad3" fill-opacity="0.95"/><rect x="479.30" y="313.5" width="0.7" height="8.1" fill="#6b8ad3" fill-opacity="0.65"/><rect x="480.05" y="312.6" width="1.0" height="9.0" fill="#6b8ad3" fill-opacity="0.95"/><rect x="481.20" y="316.2" width="0.9" height="5.4" fill="#6b8ad3" fill-opacity="0.85"/><rect x="482.05" y="312.6" width="1.0" height="9.0" fill="#6b8ad3" fill-opacity="0.85"/><rect x="482.80" y="318.9" width="0.8" height="2.7" fill="#6b8ad3" fill-opacity="0.75"/><rect x="483.80" y="318.9" width="0.7" height="2.7" fill="#6b8ad3" fill-opacity="0.95"/><rect x="484.80" y="319.8" width="0.9" height="1.8" fill="#6b8ad3" fill-opacity="0.55"/><rect x="486.30" y="318.6" width="1.0" height="3.0" fill="#6b8ad3" fill-opacity="0.85"/><rect x="486.90" y="316.2" width="0.7" height="5.4" fill="#6b8ad3" fill-opacity="0.65"/><rect x="488.20" y="316.2" width="0.8" height="5.4" fill="#6b8ad3" fill-opacity="0.75"/><rect x="488.80" y="318.0" width="0.9" height="3.6" fill="#6b8ad3" fill-opacity="0.75"/><rect x="491.20" y="313.5" width="0.8" height="8.1" fill="#6b8ad3" fill-opacity="0.75"/><rect x="492.20" y="320.7" width="0.9" height="0.9" fill="#6b8ad3" fill-opacity="0.85"/><rect x="493.05" y="320.7" width="0.7" height="0.9" fill="#6b8ad3" fill-opacity="0.75"/><rect x="494.05" y="308.1" width="0.9" height="13.5" fill="#6b8ad3" fill-opacity="0.85"/><rect x="495.20" y="320.2" width="0.9" height="1.4" fill="#6b8ad3" fill-opacity="0.95"/><rect x="496.05" y="312.6" width="0.9" height="9.0" fill="#6b8ad3" fill-opacity="0.65"/><rect x="497.20" y="320.7" width="0.7" height="0.9" fill="#6b8ad3" fill-opacity="0.75"/><rect x="497.90" y="318.9" width="0.9" height="2.7" fill="#6b8ad3" fill-opacity="0.75"/><rect x="498.90" y="318.9" width="0.7" height="2.7" fill="#6b8ad3" fill-opacity="0.55"/><rect x="500.20" y="318.9" width="1.0" height="2.7" fill="#6b8ad3" fill-opacity="0.95"/><rect x="501.30" y="320.8" width="0.7" height="0.8" fill="#6b8ad3" fill-opacity="0.85"/><rect x="502.05" y="314.4" width="0.7" height="7.2" fill="#6b8ad3" fill-opacity="0.55"/><rect x="502.80" y="304.5" width="0.8" height="17.1" fill="#6b8ad3" fill-opacity="0.85"/><rect x="504.30" y="316.2" width="0.7" height="5.4" fill="#6b8ad3" fill-opacity="0.95"/><rect x="505.30" y="318.9" width="1.0" height="2.7" fill="#6b8ad3" fill-opacity="0.95"/><rect x="505.90" y="315.3" width="0.7" height="6.3" fill="#6b8ad3" fill-opacity="0.65"/><rect x="506.80" y="315.3" width="1.0" height="6.3" fill="#6b8ad3" fill-opacity="0.65"/><rect x="507.80" y="317.1" width="0.8" height="4.5" fill="#6b8ad3" fill-opacity="0.55"/><rect x="509.20" y="320.5" width="0.7" height="1.1" fill="#6b8ad3" fill-opacity="0.55"/><rect x="510.05" y="318.9" width="0.8" height="2.7" fill="#6b8ad3" fill-opacity="0.75"/><rect x="511.30" y="319.8" width="0.9" height="1.8" fill="#6b8ad3" fill-opacity="0.75"/><rect x="513.90" y="315.3" width="1.0" height="6.3" fill="#6b8ad3" fill-opacity="0.55"/><rect x="515.05" y="318.5" width="0.7" height="3.1" fill="#6b8ad3" fill-opacity="0.85"/><rect x="516.30" y="319.8" width="0.7" height="1.8" fill="#6b8ad3" fill-opacity="0.85"/><rect x="517.30" y="320.7" width="0.7" height="0.9" fill="#6b8ad3" fill-opacity="0.55"/><rect x="518.20" y="310.8" width="1.0" height="10.8" fill="#6b8ad3" fill-opacity="0.85"/><rect x="518.80" y="310.8" width="0.7" height="10.8" fill="#6b8ad3" fill-opacity="0.85"/><rect x="520.30" y="320.1" width="0.8" height="1.5" fill="#6b8ad3" fill-opacity="0.85"/><rect x="521.20" y="319.8" width="0.7" height="1.8" fill="#6b8ad3" fill-opacity="0.55"/><rect x="522.20" y="315.3" width="0.8" height="6.3" fill="#6b8ad3" fill-opacity="0.65"/><rect x="522.80" y="308.1" width="1.0" height="13.5" fill="#6b8ad3" fill-opacity="0.55"/><rect x="523.80" y="314.4" width="0.7" height="7.2" fill="#6b8ad3" fill-opacity="0.55"/><rect x="524.90" y="314.4" width="0.7" height="7.2" fill="#6b8ad3" fill-opacity="0.65"/><rect x="526.20" y="319.8" width="0.7" height="1.8" fill="#6b8ad3" fill-opacity="0.75"/><rect x="528.30" y="317.4" width="0.8" height="4.2" fill="#6b8ad3" fill-opacity="0.85"/><rect x="528.90" y="309.9" width="0.7" height="11.7" fill="#6b8ad3" fill-opacity="0.75"/><rect x="529.90" y="309.9" width="0.7" height="11.7" fill="#6b8ad3" fill-opacity="0.75"/><rect x="531.30" y="309.9" width="1.0" height="11.7" fill="#6b8ad3" fill-opacity="0.85"/><rect x="532.05" y="309.9" width="0.7" height="11.7" fill="#6b8ad3" fill-opacity="0.55"/><rect x="532.80" y="318.0" width="0.7" height="3.6" fill="#6b8ad3" fill-opacity="0.55"/><rect x="534.30" y="319.5" width="0.7" height="2.1" fill="#6b8ad3" fill-opacity="0.85"/><rect x="535.05" y="309.9" width="0.9" height="11.7" fill="#6b8ad3" fill-opacity="0.95"/><rect x="535.90" y="318.0" width="1.0" height="3.6" fill="#6b8ad3" fill-opacity="0.95"/><rect x="536.80" y="310.8" width="0.9" height="10.8" fill="#6b8ad3" fill-opacity="0.75"/><rect x="538.30" y="311.7" width="1.0" height="9.9" fill="#6b8ad3" fill-opacity="0.85"/><rect x="538.90" y="311.7" width="0.8" height="9.9" fill="#6b8ad3" fill-opacity="0.55"/><rect x="540.05" y="318.0" width="0.8" height="3.6" fill="#6b8ad3" fill-opacity="0.85"/><rect x="541.20" y="312.6" width="1.0" height="9.0" fill="#6b8ad3" fill-opacity="0.85"/><rect x="542.05" y="314.4" width="0.9" height="7.2" fill="#6b8ad3" fill-opacity="0.75"/><rect x="543.05" y="284.8" width="0.7" height="36.8" fill="#6b8ad3" fill-opacity="0.95"/><rect x="544.30" y="312.6" width="0.9" height="9.0" fill="#6b8ad3" fill-opacity="0.95"/><rect x="544.80" y="303.6" width="0.8" height="18.0" fill="#6b8ad3" fill-opacity="0.95"/><rect x="546.05" y="303.6" width="1.0" height="18.0" fill="#6b8ad3" fill-opacity="0.65"/><rect x="547.20" y="318.0" width="1.0" height="3.6" fill="#6b8ad3" fill-opacity="0.85"/><rect x="548.30" y="318.0" width="0.8" height="3.6" fill="#6b8ad3" fill-opacity="0.85"/><rect x="550.05" y="309.0" width="0.7" height="12.6" fill="#6b8ad3" fill-opacity="0.75"/><rect x="551.05" y="302.7" width="0.9" height="18.9" fill="#6b8ad3" fill-opacity="0.85"/><rect x="551.90" y="318.3" width="0.7" height="3.3" fill="#6b8ad3" fill-opacity="0.75"/><rect x="552.90" y="319.1" width="0.8" height="2.5" fill="#6b8ad3" fill-opacity="0.75"/><rect x="554.30" y="304.5" width="1.0" height="17.1" fill="#6b8ad3" fill-opacity="0.75"/><rect x="555.30" y="304.5" width="0.7" height="17.1" fill="#6b8ad3" fill-opacity="0.95"/><rect x="556.30" y="312.6" width="1.0" height="9.0" fill="#6b8ad3" fill-opacity="0.85"/><rect x="556.90" y="318.9" width="0.8" height="2.7" fill="#6b8ad3" fill-opacity="0.75"/><rect x="558.30" y="317.9" width="0.7" height="3.7" fill="#6b8ad3" fill-opacity="0.85"/><rect x="559.20" y="308.1" width="0.8" height="13.5" fill="#6b8ad3" fill-opacity="0.75"/><rect x="560.30" y="318.1" width="0.7" height="3.5" fill="#6b8ad3" fill-opacity="0.85"/><rect x="561.20" y="314.4" width="0.7" height="7.2" fill="#6b8ad3" fill-opacity="0.95"/><rect x="562.05" y="314.4" width="0.7" height="7.2" fill="#6b8ad3" fill-opacity="0.65"/><rect x="567.20" y="318.9" width="0.9" height="2.7" fill="#6b8ad3" fill-opacity="0.95"/><rect x="568.05" y="318.9" width="1.0" height="2.7" fill="#6b8ad3" fill-opacity="0.95"/><rect x="570.30" y="320.1" width="0.8" height="1.5" fill="#6b8ad3" fill-opacity="0.65"/><rect x="571.90" y="314.4" width="0.8" height="7.2" fill="#6b8ad3" fill-opacity="0.55"/><rect x="572.90" y="314.4" width="0.9" height="7.2" fill="#6b8ad3" fill-opacity="0.75"/><rect x="574.30" y="316.2" width="0.9" height="5.4" fill="#6b8ad3" fill-opacity="0.85"/><rect x="575.30" y="318.9" width="0.8" height="2.7" fill="#6b8ad3" fill-opacity="0.65"/><rect x="575.80" y="311.7" width="1.0" height="9.9" fill="#6b8ad3" fill-opacity="0.75"/><rect x="576.80" y="311.7" width="0.9" height="9.9" fill="#6b8ad3" fill-opacity="0.85"/><rect x="577.80" y="309.9" width="0.8" height="11.7" fill="#6b8ad3" fill-opacity="0.75"/><rect x="579.30" y="320.0" width="0.7" height="1.6" fill="#6b8ad3" fill-opacity="0.75"/><rect x="580.05" y="306.3" width="0.7" height="15.3" fill="#6b8ad3" fill-opacity="0.55"/><rect x="580.80" y="320.1" width="0.8" height="1.5" fill="#6b8ad3" fill-opacity="0.95"/><rect x="582.20" y="316.2" width="0.8" height="5.4" fill="#6b8ad3" fill-opacity="0.75"/><rect x="583.05" y="316.2" width="1.0" height="5.4" fill="#6b8ad3" fill-opacity="0.55"/><rect x="584.20" y="318.9" width="0.8" height="2.7" fill="#6b8ad3" fill-opacity="0.75"/><rect x="584.80" y="302.7" width="0.9" height="18.9" fill="#6b8ad3" fill-opacity="0.65"/><rect x="585.90" y="316.2" width="1.0" height="5.4" fill="#6b8ad3" fill-opacity="0.55"/><rect x="586.80" y="319.8" width="0.7" height="1.8" fill="#6b8ad3" fill-opacity="0.55"/><rect x="589.30" y="320.3" width="0.9" height="1.3" fill="#6b8ad3" fill-opacity="0.85"/><rect x="590.20" y="307.2" width="0.7" height="14.4" fill="#6b8ad3" fill-opacity="0.95"/><rect x="591.20" y="307.2" width="0.7" height="14.4" fill="#6b8ad3" fill-opacity="0.55"/><rect x="592.05" y="307.2" width="0.9" height="14.4" fill="#6b8ad3" fill-opacity="0.95"/><rect x="592.90" y="312.6" width="0.7" height="9.0" fill="#6b8ad3" fill-opacity="0.95"/><rect x="594.20" y="306.3" width="0.8" height="15.3" fill="#6b8ad3" fill-opacity="0.85"/><rect x="594.90" y="304.5" width="0.9" height="17.1" fill="#6b8ad3" fill-opacity="0.65"/><rect x="595.90" y="240.8" width="0.8" height="80.8" fill="#6b8ad3" fill-opacity="0.55"/><rect x="597.05" y="307.2" width="0.9" height="14.4" fill="#6b8ad3" fill-opacity="0.55"/><rect x="598.30" y="320.2" width="0.7" height="1.4" fill="#6b8ad3" fill-opacity="0.55"/><rect x="599.05" y="280.3" width="1.0" height="41.3" fill="#6b8ad3" fill-opacity="0.55"/><rect x="599.80" y="285.7" width="0.8" height="35.9" fill="#6b8ad3" fill-opacity="0.75"/><rect x="600.80" y="286.6" width="0.8" height="35.0" fill="#6b8ad3" fill-opacity="0.75"/><rect x="602.30" y="232.8" width="1.0" height="88.8" fill="#6b8ad3" fill-opacity="0.55"/><rect x="603.20" y="253.3" width="0.9" height="68.3" fill="#6b8ad3" fill-opacity="0.75"/><rect x="604.05" y="251.9" width="1.0" height="69.7" fill="#6b8ad3" fill-opacity="0.55"/><rect x="605.05" y="251.9" width="1.0" height="69.7" fill="#6b8ad3" fill-opacity="0.85"/><rect x="605.90" y="292.9" width="1.0" height="28.7" fill="#6b8ad3" fill-opacity="0.65"/><rect x="606.90" y="234.6" width="0.7" height="87.0" fill="#6b8ad3" fill-opacity="0.85"/><rect x="607.90" y="310.3" width="0.7" height="11.3" fill="#6b8ad3" fill-opacity="0.65"/><rect x="608.90" y="246.1" width="0.7" height="75.5" fill="#6b8ad3" fill-opacity="0.95"/><rect x="610.05" y="246.1" width="0.8" height="75.5" fill="#6b8ad3" fill-opacity="0.85"/><rect x="610.80" y="278.5" width="1.0" height="43.1" fill="#6b8ad3" fill-opacity="0.55"/><rect x="611.80" y="279.0" width="1.0" height="42.6" fill="#6b8ad3" fill-opacity="0.75"/><rect x="613.05" y="319.8" width="0.8" height="1.8" fill="#6b8ad3" fill-opacity="0.85"/><rect x="613.80" y="309.9" width="0.9" height="11.7" fill="#6b8ad3" fill-opacity="0.65"/><rect x="615.05" y="319.6" width="0.8" height="2.0" fill="#6b8ad3" fill-opacity="0.55"/><rect x="615.90" y="295.2" width="1.0" height="26.4" fill="#6b8ad3" fill-opacity="0.95"/><rect x="616.90" y="318.0" width="1.0" height="3.6" fill="#6b8ad3" fill-opacity="0.65"/><rect x="618.05" y="309.9" width="1.0" height="11.7" fill="#6b8ad3" fill-opacity="0.85"/><rect x="618.90" y="309.9" width="0.8" height="11.7" fill="#6b8ad3" fill-opacity="0.55"/><rect x="620.05" y="320.7" width="0.9" height="0.9" fill="#6b8ad3" fill-opacity="0.75"/><rect x="620.90" y="289.8" width="0.9" height="31.8" fill="#6b8ad3" fill-opacity="0.85"/><rect x="621.80" y="292.9" width="0.9" height="28.7" fill="#6b8ad3" fill-opacity="0.85"/><rect x="623.20" y="292.9" width="0.7" height="28.7" fill="#6b8ad3" fill-opacity="0.65"/><rect x="624.30" y="293.8" width="0.7" height="27.8" fill="#6b8ad3" fill-opacity="0.65"/><rect x="625.30" y="300.0" width="1.0" height="21.6" fill="#6b8ad3" fill-opacity="0.75"/><rect x="625.80" y="300.0" width="0.9" height="21.6" fill="#6b8ad3" fill-opacity="0.65"/><rect x="627.05" y="305.1" width="1.0" height="16.5" fill="#6b8ad3" fill-opacity="0.75"/><rect x="627.90" y="245.2" width="0.8" height="76.4" fill="#6b8ad3" fill-opacity="0.55"/><rect x="629.20" y="245.2" width="0.9" height="76.4" fill="#6b8ad3" fill-opacity="0.85"/><rect x="629.90" y="294.1" width="0.7" height="27.5" fill="#6b8ad3" fill-opacity="0.75"/><rect x="630.90" y="307.5" width="0.7" height="14.1" fill="#6b8ad3" fill-opacity="0.85"/><rect x="632.30" y="320.7" width="0.9" height="0.9" fill="#6b8ad3" fill-opacity="0.95"/><rect x="632.90" y="313.7" width="1.0" height="7.9" fill="#6b8ad3" fill-opacity="0.55"/><rect x="634.30" y="320.9" width="0.9" height="0.7" fill="#6b8ad3" fill-opacity="0.65"/><rect x="635.05" y="317.5" width="1.0" height="4.1" fill="#6b8ad3" fill-opacity="0.55"/></g>
<g font-family="Liberation Sans, sans-serif" font-size="8.6" fill="#787878">
<text x="107.5" y="331.5" text-anchor="end" transform="rotate(-30 107.5 331.5)">2012-07-23</text><text x="125.2" y="331.5" text-anchor="end" transform="rotate(-30 125.2 331.5)">2012-08-18</text><text x="142.9" y="331.5" text-anchor="end" transform="rotate(-30 142.9 331.5)">2012-09-11</text><text x="160.6" y="331.5" text-anchor="end" transform="rotate(-30 160.6 331.5)">2012-09-28</text><text x="178.3" y="331.5" text-anchor="end" transform="rotate(-30 178.3 331.5)">2012-10-14</text><text x="196.0" y="331.5" text-anchor="end" transform="rotate(-30 196.0 331.5)">2012-10-29</text><text x="213.7" y="331.5" text-anchor="end" transform="rotate(-30 213.7 331.5)">2012-11-15</text><text x="231.4" y="331.5" text-anchor="end" transform="rotate(-30 231.4 331.5)">2012-12-03</text><text x="249.1" y="331.5" text-anchor="end" transform="rotate(-30 249.1 331.5)">2012-12-19</text><text x="266.8" y="331.5" text-anchor="end" transform="rotate(-30 266.8 331.5)">2013-02-08</text><text x="284.5" y="331.5" text-anchor="end" transform="rotate(-30 284.5 331.5)">2013-02-25</text><text x="302.2" y="331.5" text-anchor="end" transform="rotate(-30 302.2 331.5)">2013-03-14</text><text x="319.9" y="331.5" text-anchor="end" transform="rotate(-30 319.9 331.5)">2013-03-29</text><text x="337.6" y="331.5" text-anchor="end" transform="rotate(-30 337.6 331.5)">2013-04-13</text><text x="355.3" y="331.5" text-anchor="end" transform="rotate(-30 355.3 331.5)">2013-04-28</text><text x="373.0" y="331.5" text-anchor="end" transform="rotate(-30 373.0 331.5)">2013-05-13</text><text x="390.7" y="331.5" text-anchor="end" transform="rotate(-30 390.7 331.5)">2013-05-28</text><text x="408.4" y="331.5" text-anchor="end" transform="rotate(-30 408.4 331.5)">2013-06-12</text><text x="426.1" y="331.5" text-anchor="end" transform="rotate(-30 426.1 331.5)">2013-06-27</text><text x="443.8" y="331.5" text-anchor="end" transform="rotate(-30 443.8 331.5)">2013-07-14</text><text x="461.5" y="331.5" text-anchor="end" transform="rotate(-30 461.5 331.5)">2013-07-31</text><text x="479.2" y="331.5" text-anchor="end" transform="rotate(-30 479.2 331.5)">2013-08-18</text><text x="496.9" y="331.5" text-anchor="end" transform="rotate(-30 496.9 331.5)">2013-09-03</text><text x="514.6" y="331.5" text-anchor="end" transform="rotate(-30 514.6 331.5)">2013-09-18</text><text x="532.3" y="331.5" text-anchor="end" transform="rotate(-30 532.3 331.5)">2013-10-03</text><text x="550.0" y="331.5" text-anchor="end" transform="rotate(-30 550.0 331.5)">2013-10-19</text><text x="567.7" y="331.5" text-anchor="end" transform="rotate(-30 567.7 331.5)">2013-11-04</text><text x="585.4" y="331.5" text-anchor="end" transform="rotate(-30 585.4 331.5)">2013-11-22</text><text x="603.1" y="331.5" text-anchor="end" transform="rotate(-30 603.1 331.5)">2013-12-09</text><text x="620.8" y="331.5" text-anchor="end" transform="rotate(-30 620.8 331.5)">2013-12-24</text>
</g>
</svg>
<h2 style="top:368px">Recent Orders</h2>
<div class="tool top"><span style="position:absolute;left:2.3px;top:4px;line-height:12px">Show</span><span class="sel">10<svg style="position:absolute;right:4px;top:2px" width="3" height="5" viewBox="0 0 3 5"><path d="M1.500 0L3 2H0zM1.500 5L0 3h3z" fill="#333"/></svg></span><span style="position:absolute;left:70.3px;top:4px;line-height:12px">entries</span>
<span style="position:absolute;left:524.5px;top:7px;line-height:12px">Search:</span><span class="search"></span></div>
<table><thead><tr><th style="width:90px"><div class="thw">Order ID<span class="si"><svg width="6" height="7" viewBox="0 0 6 7"><path d="M3 2.2 L5.4 5 H0.6 Z" fill="#555"/></svg></span><span class="si2"><svg width="5" height="8" viewBox="0 0 5 8"><path d="M2.5 0.2 L5 4.6 H0 Z" fill="#7378d6"/></svg></span></div></th><th style="width:101px"><div class="thw">Customer<span class="si"><svg width="6" height="7" viewBox="0 0 6 7"><path d="M1.2 2.7 L3 0.9 L4.8 2.7 M1.2 4.3 L3 6.1 L4.8 4.3" fill="none" stroke="#606060" stroke-width="0.7"/></svg></span><span class="si2"><svg width="5" height="8" viewBox="0 0 5 8"><path d="M2.5 0 L4.8 3.2 H0.2 Z M2.5 8 L0.2 4.8 H4.800 Z" fill="#dcdcdc"/><rect x="1.5" y="3" width="2" height="2" fill="#e4e4e4"/></svg></span></div></th><th style="width:110.5px"><div class="thw">Status<span class="si"><svg width="6" height="7" viewBox="0 0 6 7"><path d="M1.2 2.7 L3 0.9 L4.8 2.7 M1.2 4.3 L3 6.1 L4.8 4.3" fill="none" stroke="#606060" stroke-width="0.7"/></svg></span><span class="si2"><svg width="5" height="8" viewBox="0 0 5 8"><path d="M2.5 0 L4.8 3.2 H0.2 Z M2.5 8 L0.2 4.8 H4.800 Z" fill="#dcdcdc"/><rect x="1.5" y="3" width="2" height="2" fill="#e4e4e4"/></svg></span></div></th><th style="width:110.5px"><div class="thw">Fulfillment<span class="si"><svg width="6" height="7" viewBox="0 0 6 7"><path d="M1.2 2.7 L3 0.9 L4.8 2.7 M1.2 4.3 L3 6.1 L4.8 4.3" fill="none" stroke="#606060" stroke-width="0.7"/></svg></span><span class="si2"><svg width="5" height="8" viewBox="0 0 5 8"><path d="M2.5 0 L4.8 3.2 H0.2 Z M2.5 8 L0.2 4.8 H4.800 Z" fill="#dcdcdc"/><rect x="1.5" y="3" width="2" height="2" fill="#e4e4e4"/></svg></span></div></th><th style="width:72.5px"><div class="thw">Total<span class="si"><svg width="6" height="7" viewBox="0 0 6 7"><path d="M1.2 2.7 L3 0.9 L4.8 2.7 M1.2 4.3 L3 6.1 L4.8 4.3" fill="none" stroke="#606060" stroke-width="0.7"/></svg></span><span class="si2"><svg width="5" height="8" viewBox="0 0 5 8"><path d="M2.5 0 L4.8 3.2 H0.2 Z M2.5 8 L0.2 4.8 H4.800 Z" fill="#dcdcdc"/><rect x="1.5" y="3" width="2" height="2" fill="#e4e4e4"/></svg></span></div></th><th style="width:80.5px"><div class="thw">Items<span class="si"><svg width="6" height="7" viewBox="0 0 6 7"><path d="M1.2 2.7 L3 0.9 L4.8 2.7 M1.2 4.3 L3 6.1 L4.8 4.3" fill="none" stroke="#606060" stroke-width="0.7"/></svg></span><span class="si2"><svg width="5" height="8" viewBox="0 0 5 8"><path d="M2.5 0 L4.8 3.2 H0.2 Z M2.5 8 L0.2 4.8 H4.800 Z" fill="#dcdcdc"/><rect x="1.5" y="3" width="2" height="2" fill="#e4e4e4"/></svg></span></div></th><th style="width:125px"><div class="thw">Created<span class="si"><svg width="6" height="7" viewBox="0 0 6 7"><path d="M1.2 2.7 L3 0.9 L4.8 2.7 M1.2 4.3 L3 6.1 L4.8 4.3" fill="none" stroke="#606060" stroke-width="0.7"/></svg></span><span class="si2"><svg width="5" height="8" viewBox="0 0 5 8"><path d="M2.5 0 L4.8 3.2 H0.2 Z M2.5 8 L0.2 4.8 H4.800 Z" fill="#dcdcdc"/><rect x="1.5" y="3" width="2" height="2" fill="#e4e4e4"/></svg></span></div></th></tr></thead><tbody>
<tr class="odd"><td class="s1"><a>100003838</a></td><td>Lorraine</td><td>Processing</td><td>Complete</td><td>$274.24</td><td>1</td><td>2014-08-20 13:55:22</td></tr><tr class="even"><td class="s1"><a>100003837</a></td><td>Jeannette</td><td>Processing</td><td>Complete</td><td>$55.28</td><td>1</td><td>2014-08-19 21:11:27</td></tr><tr class="odd"><td class="s1"><a>100003836</a></td><td>Chalone</td><td>Complete</td><td>Complete</td><td>$64.99</td><td>1</td><td>2014-08-19 16:56:39</td></tr><tr class="even"><td class="s1"><a>100003835</a></td><td>Daniel</td><td>Processing</td><td>Complete</td><td>$127.57</td><td>2</td><td>2014-08-19 15:06:04</td></tr><tr class="odd"><td class="s1"><a>100003833</a></td><td>Ron</td><td>Complete</td><td>Processing</td><td>$134.10</td><td>3</td><td>2014-08-18 17:57:57</td></tr><tr class="even"><td class="s1"><a>100003832</a></td><td>Toni</td><td>Complete</td><td>Complete</td><td>$66.62</td><td>1</td><td>2014-08-18 16:50:18</td></tr><tr class="odd"><td class="s1"><a>100003831</a></td><td>Mary</td><td>Processing</td><td>Complete</td><td>$493.40</td><td>1</td><td>2014-08-16 17:01:50</td></tr><tr class="even"><td class="s1"><a>100003829</a></td><td>La Tanya</td><td>Complete</td><td>Complete</td><td>$96.53</td><td>1</td><td>2014-08-14 18:53:24</td></tr><tr class="odd"><td class="s1"><a>100003828</a></td><td>Michael</td><td>Complete</td><td>Complete</td><td>$174.48</td><td>2</td><td>2014-08-12 13:19:30</td></tr><tr class="even"><td class="s1"><a>100003826</a></td><td>Ralph</td><td>Complete</td><td>Complete</td><td>$40.33</td><td>1</td><td>2014-08-07 20:04:44</td></tr>
</tbody></table>
<div class="tool bot"><span style="position:absolute;left:2.5px;top:9.2px;line-height:10px;font-size:8.2px">Showing 1 to 10 of 3,780 entries</span>
<span class="pg dis" style="left:484px;width:23px">First</span><span class="pg dis" style="left:509px;width:37px">Previous</span><span class="pg dis" style="left:548px;width:10px">1</span>
<span class="pg" style="left:560.5px;width:9.5px">2</span><span class="pg" style="left:572.5px;width:9.5px">3</span><span class="pg" style="left:584.5px;width:9.5px">4</span><span class="pg" style="left:596.5px;width:9.5px">5</span><span style="position:absolute;left:606.5px;top:9px;line-height:10px">…</span>
<span class="pg" style="left:617px;width:20px">378</span><span class="pg" style="left:639.5px;width:22.500px">Next</span><span class="pg" style="left:664.5px;width:21px">Last</span>
</div>
</body></html>
